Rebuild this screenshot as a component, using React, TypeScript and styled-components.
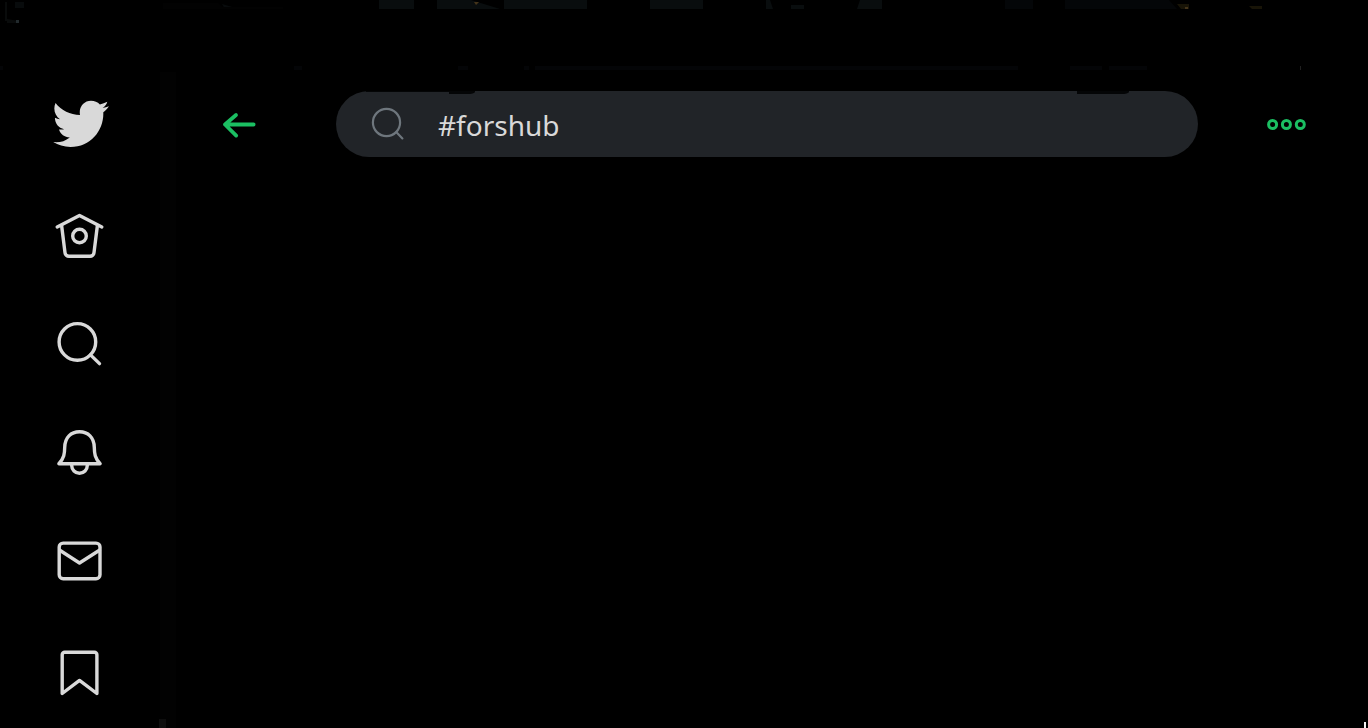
import React from "react";
import styled, { createGlobalStyle } from "styled-components";

const GlobalStyle = createGlobalStyle`
  * { box-sizing: border-box; }
  body { margin: 0; background: #000; font-family: "Noto Sans", "Open Sans", sans-serif; }
`;

const Page = styled.div`
  position: relative;
  display: flex;
  min-height: 100vh;
  background: #000;
`;

const Backdrop = styled.svg`
  position: absolute;
  top: 0;
  left: 0;
  width: 100%;
  height: 72px;
  pointer-events: none;
`;

const Sidebar = styled.aside`
  flex: 0 0 160px;
  padding-top: 92px;
`;

const Divider = styled.div`
  flex: 0 0 16px;
  margin-top: 72px;
  background: #020202;
`;

const LogoLink = styled.a`
  display: flex;
  justify-content: center;
  align-items: center;
  height: 64px;
  margin-bottom: 26px;
  padding-left: 2px;
  color: #d9d9d9;
`;

const NavLink = styled.a`
  display: flex;
  justify-content: center;
  height: 109px;
  padding-top: 24px;
  color: #d9d9d9;
`;

const Icon = styled.svg<{ $stroke: number }>`
  flex: none;
  fill: none;
  stroke: currentColor;
  stroke-width: ${(p) => p.$stroke};
  stroke-linecap: round;
  stroke-linejoin: round;
`;

const Main = styled.main`
  flex: 1;
  min-width: 0;
`;

const TopBar = styled.header`
  display: flex;
  align-items: center;
  margin-top: 91px;
  padding: 0 58px 0 44px;
`;

const IconButton = styled.button`
  display: flex;
  flex: none;
  padding: 0;
  border: 0;
  background: none;
  color: #1bbf62;
  cursor: pointer;
`;

const SearchBox = styled.label`
  position: relative;
  display: flex;
  flex: 1;
  align-items: center;
  gap: 30px;
  height: 66px;
  margin: 0 66px 0 76px;
  padding: 0 32px;
  border-radius: 33px;
  background: #212428;
  color: #6e767d;
`;

const SearchInput = styled.input`
  flex: 1;
  min-width: 0;
  height: 48px;
  padding: 2px 0 0;
  border: 0;
  outline: 0;
  background: none;
  color: #d9d9d9;
  font: 400 28px/44px "Noto Sans", "Open Sans", sans-serif;
`;

const EdgeMark = styled.span<{ $left: string; $width: number; $height: number }>`
  position: absolute;
  top: 0;
  left: ${(p) => p.$left};
  width: ${(p) => p.$width}px;
  height: ${(p) => p.$height}px;
  background: #040506;
  border-bottom-right-radius: 8px 2px;
`;

const CornerMark = styled.span<{ $side: "left" | "right" }>`
  position: absolute;
  bottom: 0;
  ${(p) => (p.$side === "left" ? "left: 159px;" : "right: 2px;")}
  width: ${(p) => (p.$side === "left" ? 7 : 2)}px;
  height: ${(p) => (p.$side === "left" ? 9 : 6)}px;
  background: ${(p) => (p.$side === "left" ? "#0e0e0e" : "#f4f4f4")};
`;

const navItems: { label: string; art: React.ReactNode }[] = [
  {
    label: "Home",
    art: (
      <>
        <path d="M7.2 21 29.5 9.4 51.8 21" />
        <path d="M11.6 19.5 15 46.6a4 4 0 0 0 4 3.7h21a4 4 0 0 0 4-3.7l3.4-27.1" />
        <circle cx="29.5" cy="30" r="6.8" />
      </>
    ),
  },
  {
    label: "Explore",
    art: (
      <>
        <circle cx="27.4" cy="26.9" r="18.3" />
        <path d="M40.5 39.9 49.5 48.6" />
      </>
    ),
  },
  {
    label: "Notifications",
    art: (
      <>
        <path d="M8.9 39.7C14.2 34 14.6 29.5 14.7 23.5 14.8 13.5 21 7.8 29.5 7.8S44.2 13.5 44.3 23.5C44.4 29.5 44.8 34 50.1 39.7Z" />
        <path d="M21.7 40.5v1a7.8 7.8 0 0 0 15.6 0v-1" />
      </>
    ),
  },
  {
    label: "Messages",
    art: (
      <>
        <rect x="9.2" y="10.1" width="40.8" height="35.7" rx="4" />
        <path d="M9.8 17.3 29.5 30 49.4 17.3" />
      </>
    ),
  },
  {
    label: "Bookmarks",
    art: <path d="M12.2 51.5V12.7a2.5 2.5 0 0 1 2.5-2.5h29.7a2.5 2.5 0 0 1 2.5 2.5V51.5L29.5 38.4Z" />,
  },
];

export default function App() {
  return (
    <Page>
      <GlobalStyle />
      <Backdrop viewBox="0 0 1368 72" preserveAspectRatio="none" aria-hidden="true">
        <path d="M5 2h2v19H5zM7 19l12 2v2H7z" fill="#090b0b" />
        <path d="M15 2h9v6h-9zM222 4l17 5h-14z" fill="#080b0c" />
        <path d="M163 3h55l4 4h61v2H163z" fill="#020202" />
        <path d="M379 0h35v9h-35zM437 0h34l29 9h-63zM504 0h83v9h-83zM650 0h53v9h-53zM766 0h4l3 9h-7zM860 0h22v9h-25zM791 5h13v4h-13z" fill="#090d0e" />
        <path d="M1005 0h28v9h-28zM1065 0h104l8 9h-112z" fill="#040608" />
        <path d="M1177 4h12v5h-8zM1249 6h13v3h-10z" fill="#181407" />
        <path d="M474 2h5l-3 3zM1185 7h3v2h-3z" fill="#44341a" />
        <path d="M16 20h3v3h-3z" fill="#222a2d" />
        <path d="M535 66h483v4H535zM1070 66h32v4h-32zM1109 66h38v4h-38zM458 66h10v4h-10zM294 66h8v4h-8zM524 66h5v4h-5zM0 66h3v4H0z" fill="#040507" />
        <path d="M1300 66h1v4h-1z" fill="#202020" />
      </Backdrop>
      <Sidebar>
        <LogoLink href="#" aria-label="Twitter">
          <svg width="56" height="48" viewBox="0 0 56 48" fill="currentColor">
            <path d="M2.5 3C8.5 10.5 17 14.7 27 14.9 25.500 7 31 .8 38 .8 41.500 .8 44.600 2.200 46.900 4.400 49.500 3.900 52 3 54.300 1.800 53.500 4.500 52 6.500 49.600 8 51.800 7.800 54 7.200 55.900 6.300 54.400 8.700 52.500 10.700 50.300 12.300 51 30 38 46.900 17.500 46.900 11 46.900 5 45.200.3 42.100 6.500 42.800 12 41.200 16.800 37.400 11.500 37.200 7.500 34 6 29.400 7.800 29.700 9.500 29.600 11.200 29.200 5.500 28 2 23.500 1.900 17.800 3.500 18.700 5.200 19.100 7 19.200 2 15.700-.2 9 2.500 3Z" />
          </svg>
        </LogoLink>
        <nav aria-label="Primary">
          {navItems.map((item) => (
            <NavLink key={item.label} href="#" aria-label={item.label}>
              <Icon width="60" height="60" viewBox="0 0 60 60" $stroke={3.4}>
                {item.art}
              </Icon>
            </NavLink>
          ))}
        </nav>
      </Sidebar>
      <Divider />
      <Main>
        <TopBar>
          <IconButton type="button" aria-label="Back">
            <Icon width="40" height="32" viewBox="0 0 40 32" $stroke={3.8}>
              <path d="M33.6 16.5H5M16 7 5 16.5 16.2 27.6" />
            </Icon>
          </IconButton>
          <SearchBox>
            <Icon width="40" height="40" viewBox="0 0 40 40" $stroke={2.2}>
              <circle cx="18.5" cy="18.5" r="13.6" />
              <path d="M28.2 28.1 34.4 34.4" />
            </Icon>
            <SearchInput type="text" aria-label="Search" defaultValue="#forshub" />
            <EdgeMark $left="30px" $width={109} $height={1} />
            <EdgeMark $left="113px" $width={26} $height={3} />
            <EdgeMark $left="86%" $width={52} $height={3} />
          </SearchBox>
          <IconButton type="button" aria-label="More">
            <Icon width="46" height="32" viewBox="0 0 46 32" $stroke={3}>
              <circle cx="8.6" cy="16.5" r="4" />
              <circle cx="22.4" cy="16.5" r="4" />
              <circle cx="36.3" cy="16.5" r="4" />
            </Icon>
          </IconButton>
        </TopBar>
      </Main>
      <CornerMark $side="left" />
      <CornerMark $side="right" />
    </Page>
  );
}
